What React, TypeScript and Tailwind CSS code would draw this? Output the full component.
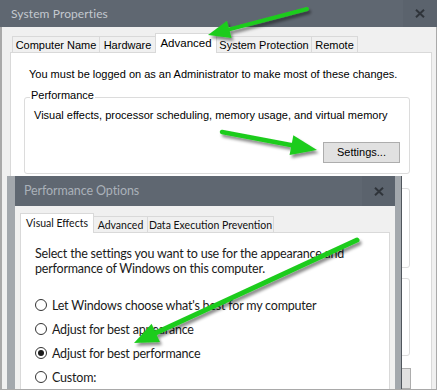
import React from "react";

type Pt = [number, number];

function Arrow({ from, tip, len, half, sw }: { from: Pt; tip: Pt; len: number; half: number; sw: number }) {
  const dx = tip[0] - from[0];
  const dy = tip[1] - from[1];
  const d = Math.hypot(dx, dy);
  const ux = dx / d;
  const uy = dy / d;
  const bx = tip[0] - ux * len;
  const by = tip[1] - uy * len;
  const px = -uy * half;
  const py = ux * half;
  const pts = `${tip[0]},${tip[1]} ${bx + px},${by + py} ${bx - px},${by - py}`;
  return (
    <g filter="url(#arrowShadow)">
      <line x1={from[0]} y1={from[1]} x2={bx + ux * 2} y2={by + uy * 2} stroke="#1fcc1f" strokeWidth={sw} strokeLinecap="round" />
      <polygon points={pts} fill="#1fcc1f" />
    </g>
  );
}

function CloseX() {
  return (
    <svg width="10" height="9" viewBox="0 0 10 9">
      <path d="M1 0.8 L9 8.2 M9 0.8 L1 8.2" stroke="#2f343a" strokeWidth="2" />
    </svg>
  );
}

function Radio({ checked }: { checked?: boolean }) {
  return (
    <div className="w-[12px] h-[12px] rounded-full border border-[#333333] bg-white flex items-center justify-center shrink-0">
      {checked && <div className="w-[6px] h-[6px] rounded-full bg-[#1a1a1a]" />}
    </div>
  );
}

export default function App() {
  return (
    <div className="relative w-[437px] h-[390px] overflow-hidden bg-[#f0f0f0] font-['Liberation_Sans',Arial,sans-serif] text-black">
      {/* Outer window: System Properties */}
      <div className="flex flex-col h-full">
        <div className="h-[27px] shrink-0 bg-[#5f6771] flex items-center justify-between">
          <span className="pl-[11px] text-[12px] tracking-[0.1px] text-[#c4c9cf] font-['Lato',sans-serif]">System Properties</span>
          <div className="w-[34px] h-full bg-[#5b636d] flex items-center justify-center">
            <CloseX />
          </div>
        </div>
        <div className="flex-1 flex flex-col pl-[10px] pr-[5px] pt-[6px] text-[11px] leading-[13px]">
          {/* tabs */}
          <div className="flex items-end h-[20px] ml-[2px] whitespace-nowrap">
            <div className="w-[87px] h-[17px] border-l border-t border-[#d9d9d9] bg-[#f0f0f0] flex items-center justify-center">Computer Name</div>
            <div className="w-[56px] h-[17px] border-l border-t border-[#d9d9d9] bg-[#f0f0f0] flex items-center justify-center">Hardware</div>
            <div className="relative z-10 w-[62px] h-[20px] border-x border-t border-[#d9d9d9] bg-white flex items-center justify-center pb-[1px] text-[11.5px]">Advanced</div>
            <div className="w-[94px] h-[17px] border-t border-[#d9d9d9] bg-[#f0f0f0] flex items-center justify-center">System Protection</div>
            <div className="w-[47px] h-[17px] border-l border-t border-r border-[#d9d9d9] bg-[#f0f0f0] flex items-center justify-center">Remote</div>
          </div>
          {/* panel */}
          <div className="relative -mt-px flex-1 bg-white border border-[#d9d9d9] flex flex-col">
            <div className="pt-[15px] pl-[18px]">You must be logged on as an Administrator to make most of these changes.</div>
            <div className="relative mt-[16px] ml-[13px] mr-[21px] h-[77px] border border-[#dcdcdc] rounded-[3px] flex flex-col">
              <span className="absolute left-[5px] -top-[9px] bg-white px-[1px]">Performance</span>
              <div className="pt-[11px] pl-[9px]">Visual effects, processor scheduling, memory usage, and virtual memory</div>
              <div className="self-end mt-[20px] mr-[9px] w-[77px] h-[21px] bg-[#e1e1e1] border border-[#adadad] flex items-center justify-center">Settings...</div>
            </div>
            <div className="mt-[14px] ml-[13px] mr-[21px] h-[80px] border border-[#dcdcdc] rounded-[3px]" />
            <div className="mt-[10px] ml-[13px] mr-[21px] h-[78px] border border-[#dcdcdc] rounded-[3px]" />
            <div className="self-end mt-[12px] mr-[20px] w-[120px] h-[21px] bg-[#e1e1e1] border border-[#adadad]" />
          </div>
        </div>
      </div>

      {/* Screenshot frame */}
      <div className="absolute left-0 right-0 top-[27px] bottom-0 border-l-2 border-r border-b border-[#a9a9a9] pointer-events-none z-30" />

      {/* Inner window: Performance Options */}
      <div className="absolute left-[7px] top-[176px] w-[395px] h-[230px] flex z-20 font-['Lato',sans-serif]">
        <div className="w-[8px] bg-[#a3a8ad]" />
        <div className="flex-1 flex flex-col">
          <div className="h-[30px] shrink-0 bg-[#5f6771] flex items-center justify-between">
            <span className="pl-[9px] text-[12.5px] tracking-[-0.1px] text-[#aab1b9]">Performance Options</span>
            <div className="w-[33px] h-full bg-[#5b636d] flex items-center justify-center">
              <CloseX />
            </div>
          </div>
          <div className="flex-1 bg-[#f0f0f0] flex flex-col pl-[5px] pr-[5px] pt-[7px]">
            <div className="flex items-end h-[20px] text-[10.5px] leading-[13px] text-[#111] whitespace-nowrap">
              <div className="relative z-10 w-[74px] h-[20px] border-x border-t border-[#d9d9d9] bg-white flex items-center justify-center pb-[1px]">Visual Effects</div>
              <div className="w-[53px] h-[17px] border-t border-[#d9d9d9] bg-[#f0f0f0] flex items-center justify-center">Advanced</div>
              <div className="w-[127px] h-[17px] border-l border-t border-r border-[#d9d9d9] bg-[#f0f0f0] flex items-center justify-center">Data Execution Prevention</div>
            </div>
            <div className="relative -mt-px flex-1 bg-white border border-[#d9d9d9] pl-[14px] pt-[13px] text-[12.5px] tracking-[-0.2px] leading-[15px] text-[#1a1a1a] whitespace-nowrap">
              <div>
                Select the settings you want to use for the appearance and
                <br />
                performance of Windows on this computer.
              </div>
              <div className="mt-[17px] flex flex-col">
                <div className="h-[24px] flex items-center gap-[5px]"><Radio /><span>Let Windows choose what's best for my computer</span></div>
                <div className="h-[24px] flex items-center gap-[5px]"><Radio /><span>Adjust for best appearance</span></div>
                <div className="h-[24px] flex items-center gap-[5px]"><Radio checked /><span>Adjust for best performance</span></div>
                <div className="h-[24px] flex items-center gap-[5px]"><Radio /><span>Custom:</span></div>
              </div>
            </div>
          </div>
        </div>
        <div className="w-[6px] bg-[#a3a8ad]" />
        <div className="w-px bg-[#50565d]" />
      </div>

      {/* Green arrows */}
      <svg className="absolute inset-0 z-40 pointer-events-none" width="437" height="390" viewBox="0 0 437 390">
        <defs>
          <filter id="arrowShadow" x="-20%" y="-40%" width="150%" height="190%">
            <feDropShadow dx="2" dy="3" stdDeviation="1.8" floodColor="#000" floodOpacity="0.45" />
          </filter>
        </defs>
        <Arrow from={[307, 9]} tip={[208, 35]} len={22} half={9} sw={4} />
        <Arrow from={[222, 132]} tip={[317, 150]} len={26} half={10} sw={4.5} />
        <Arrow from={[357, 240]} tip={[134, 343]} len={24} half={10} sw={5} />
      </svg>
    </div>
  );
}
